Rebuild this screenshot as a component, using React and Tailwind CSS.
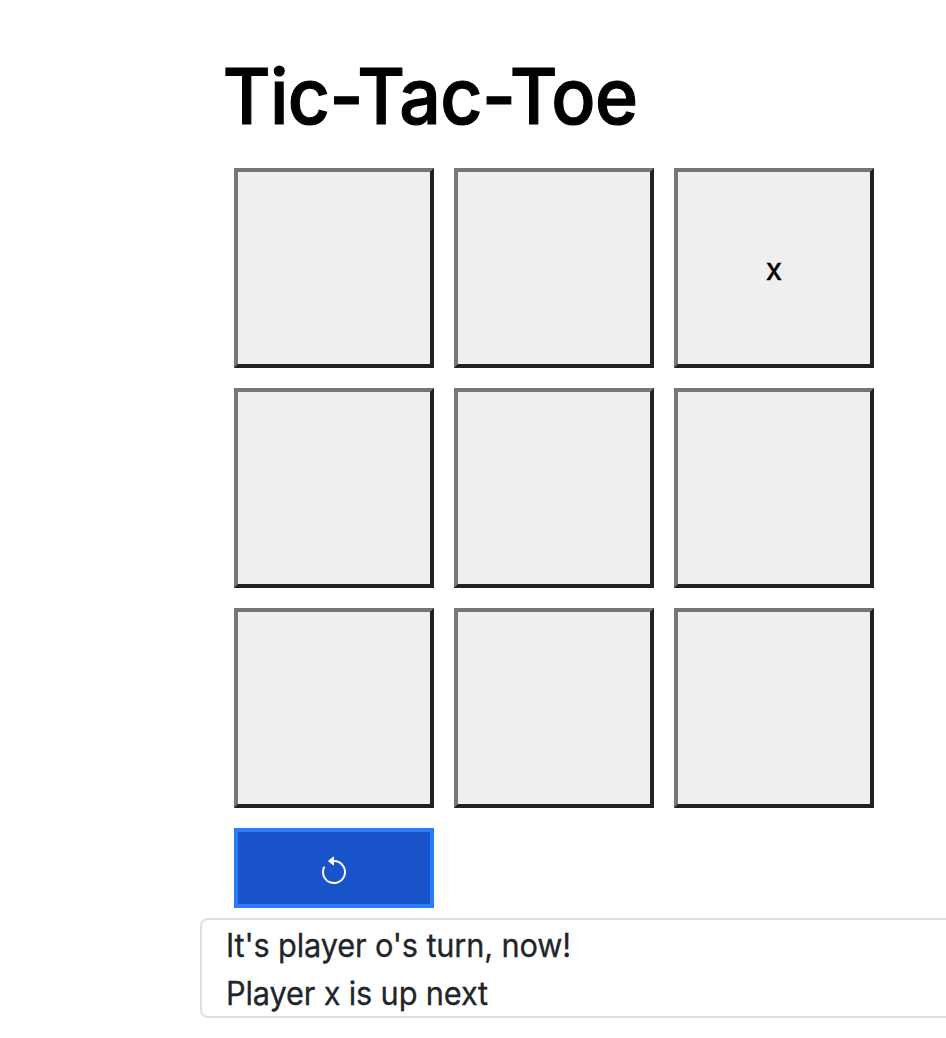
import React from "react";
import { BsArrowCounterclockwise } from "react-icons/bs";

const cells = ["", "", "x", "", "", "", "", "", ""];

export default function App() {
  return (
    <main className="h-[1038px] overflow-hidden bg-white pl-[200px] font-['Inter','Liberation_Sans',sans-serif]">
      <h1 className="h-36 origin-left scale-x-[0.945] pt-[48px] pl-[24px] text-[77.5px] leading-[96px] font-medium tracking-[-0.6px] text-black [-webkit-text-stroke:1.2px_black]">Tic-Tac-Toe</h1>
      <div className="mt-6 ml-[34px] grid w-[640px] grid-cols-3 gap-5">
        {cells.map((c, i) => (
          <button key={i} className="flex h-[200px] items-center justify-center border-4 border-t-[#767676] border-r-[#212121] border-b-[#212121] border-l-[#767676] bg-[#efefef] pt-[3px] text-[30px] text-black [-webkit-text-stroke:0.5px_black]">
            {c}
          </button>
        ))}
      </div>
      <button aria-label="Restart" className="mt-5 ml-[34px] flex h-20 w-[200px] items-center justify-center border-4 border-[#2b7cf9] bg-[#1853c9] pt-2 text-white">
        <BsArrowCounterclockwise size={32} />
      </button>
      <div className="mt-[10px] h-[100px] w-[800px] rounded-lg border-2 border-[#dfdfdf] pt-[2px] pl-6 text-[32px] leading-[48px] tracking-[-0.15px] text-[#212529] [-webkit-text-stroke:0.3px_#212529]">
        <p className="origin-left scale-x-[0.96]">It's player o's turn, now!</p>
        <p className="origin-left scale-x-[0.96]">Player x is up next</p>
      </div>
    </main>
  );
}
